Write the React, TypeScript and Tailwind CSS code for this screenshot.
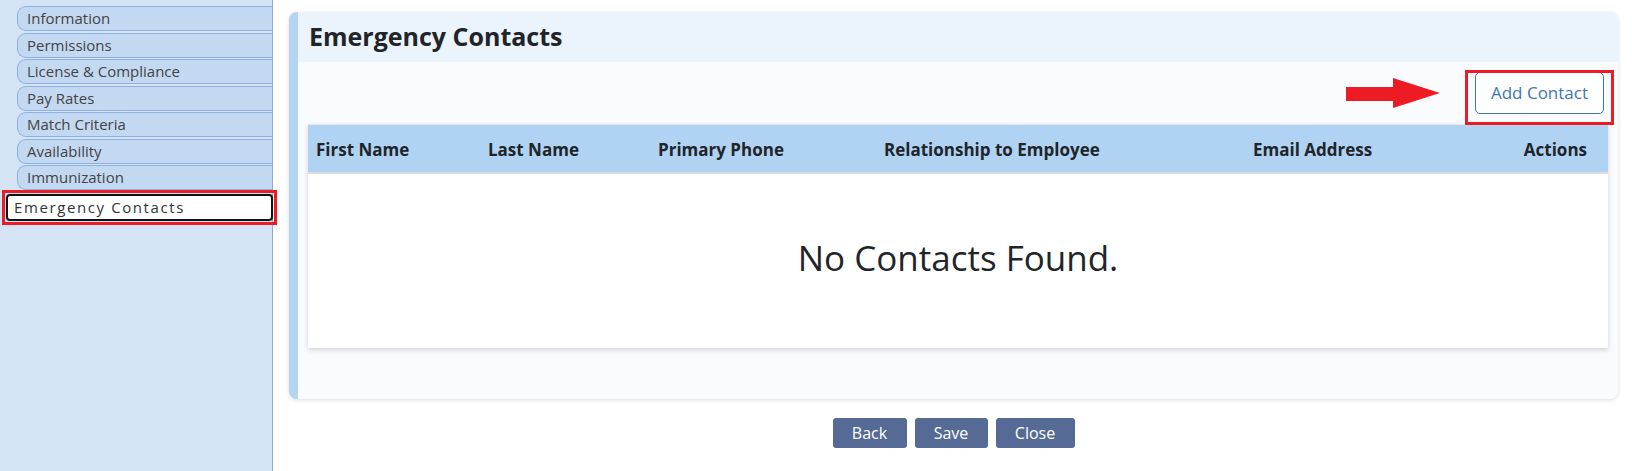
const navItems = [
  'Information',
  'Permissions',
  'License & Compliance',
  'Pay Rates',
  'Match Criteria',
  'Availability',
  'Immunization',
]

const columns = [
  { label: 'First Name', cls: 'w-[172px] pl-2' },
  { label: 'Last Name', cls: 'w-[170px] pl-2' },
  { label: 'Primary Phone', cls: 'w-[226px] pl-2' },
  { label: 'Relationship to Employee', cls: 'w-[369px] pl-2' },
  { label: 'Email Address', cls: 'flex-1 pl-2' },
  { label: 'Actions', cls: 'w-[120px] pr-[21px] text-right' },
]

export default function App() {
  return (
    <div
      className="flex h-[471px] w-full bg-white text-[#212529]"
      style={{ fontFamily: '"Open Sans", "Liberation Sans", sans-serif' }}
    >
      {/* sidebar */}
      <aside className="relative w-[273px] shrink-0 border-r border-[#8ea8dc] bg-[#d5e4f4] pt-[6px]">
        <div className="flex flex-col gap-[1.5px] pl-[17px]">
          {navItems.map((item) => (
            <div
              key={item}
              className="flex h-[25px] items-center rounded-l-[9px] border border-r-0 border-[#8fb0e2] bg-[#c3d8f1] pl-[9px] text-[15px] text-[#444]"
            >
              {item}
            </div>
          ))}
        </div>
        <div className="relative z-10 ml-[2px] w-[275px] border-[3px] border-[#ed1c24] p-[1px]">
          <div className="flex h-[27px] items-center rounded-[4px] border-2 border-[#111] bg-white pl-[6px] text-[15px] tracking-[1.6px] text-[#333]">
            Emergency Contacts
          </div>
        </div>
      </aside>

      {/* main */}
      <main className="flex flex-1 flex-col pl-4 pr-[14px] pt-3">
        <section className="relative overflow-hidden rounded-lg border-l-[9px] border-[#b3d4f3] bg-[#f9fbfe] shadow-[0_1px_4px_rgba(0,0,0,0.14)]">
          <div className="flex h-[50px] items-center bg-[#ebf3fd] pl-[11px]">
            <h1 className="text-[25px] font-bold text-[#212529]">Emergency Contacts</h1>
          </div>

          <div className="px-[10px] pb-[51px]">
            <div className="flex h-[62px] items-center justify-end pr-[4px]">
              <button className="h-[42px] w-[129px] rounded-[5px] border border-[#3d77b1] bg-white text-[17px] text-[#3d77b1]">
                Add Contact
              </button>
            </div>

            <div className="bg-white shadow-[0_2px_5px_rgba(0,0,0,0.16)]">
              <div className="flex h-[50px] items-center border-t border-b-2 border-t-[#e3e6ea] border-b-[#dadee4] bg-[#b0d3f3] pt-[3px] text-[17px] font-bold text-[#212529]">
                {columns.map((c) => (
                  <div key={c.label} className={c.cls}>
                    {c.label}
                  </div>
                ))}
              </div>
              <div className="flex h-[174px] items-center justify-center pb-[6px] text-[35px] text-[#212529]">
                No Contacts Found.
              </div>
            </div>
          </div>

          {/* annotation: arrow + highlight box */}
          <svg
            className="absolute left-[1048px] top-[66px]"
            width="96"
            height="32"
            viewBox="0 0 96 32"
          >
            <polygon points="0,9 47,9 47,0 94,15 47,30 47,23 0,23" fill="#ed1c24" />
          </svg>
          <div className="pointer-events-none absolute left-[1167px] top-[58px] h-[55px] w-[149px] border-[3px] border-[#ed1c24]" />
        </section>

        <div className="mt-[19px] flex justify-center gap-2">
          <button className="h-[30px] w-[74px] rounded-[3px] bg-[#556b95] text-[16px] text-white">Back</button>
          <button className="h-[30px] w-[73px] rounded-[3px] bg-[#556b95] text-[16px] text-white">Save</button>
          <button className="h-[30px] w-[79px] rounded-[3px] bg-[#556b95] text-[16px] text-white">Close</button>
        </div>
      </main>
    </div>
  )
}
